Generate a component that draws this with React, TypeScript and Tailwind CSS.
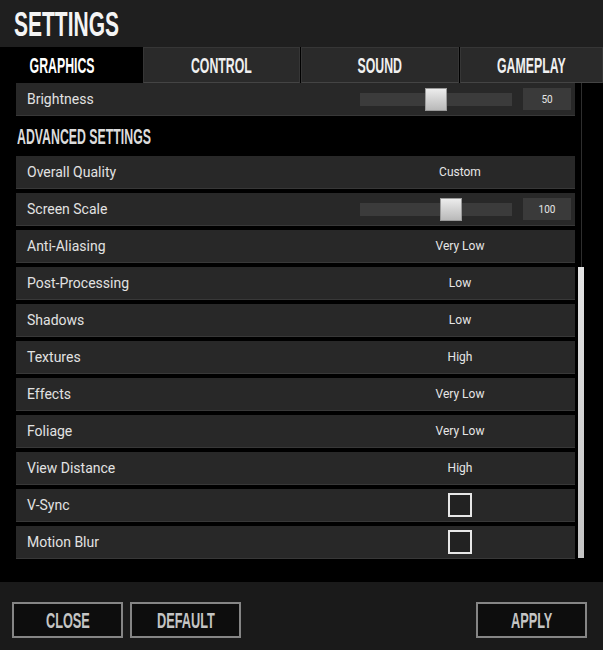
import React from 'react';

const narrow = { fontFamily: '"Liberation Sans", Arial, sans-serif' };
const body = { fontFamily: 'Roboto, "Noto Sans", sans-serif' };

// Squeezed bold caps used for titles, tabs and buttons
function Caps({ children, className = 'scale-x-[0.58]' }: { children: React.ReactNode; className?: string }) {
  return (
    <span style={narrow} className={`inline-block font-bold whitespace-nowrap ${className}`}>
      {children}
    </span>
  );
}

type Row = { label: string; value?: string; slider?: { pos: number; value: string }; check?: boolean };

const rows: Row[] = [
  { label: 'Overall Quality', value: 'Custom' },
  { label: 'Screen Scale', slider: { pos: 80, value: '100' } },
  { label: 'Anti-Aliasing', value: 'Very Low' },
  { label: 'Post-Processing', value: 'Low' },
  { label: 'Shadows', value: 'Low' },
  { label: 'Textures', value: 'High' },
  { label: 'Effects', value: 'Very Low' },
  { label: 'Foliage', value: 'Very Low' },
  { label: 'View Distance', value: 'High' },
  { label: 'V-Sync', check: true },
  { label: 'Motion Blur', check: true },
];

function Slider({ pos, value }: { pos: number; value: string }) {
  return (
    <div className="flex items-center gap-[11px] pr-[4px]">
      <div className="relative w-[152px] h-[13px] bg-[#3b3b3b]">
        <div
          className="absolute top-[-5px] w-[22px] h-[23px] bg-gradient-to-b from-[#ececec] to-[#b9b9b9] border border-[#9a9a9a]"
          style={{ left: pos }}
        />
      </div>
      <div className="w-[48px] h-[22px] bg-[#3a3a3a] flex items-center justify-center text-[10px] text-[#e6e6e6]">
        {value}
      </div>
    </div>
  );
}

function SettingRow({ row }: { row: Row }) {
  return (
    <div className="h-[33px] bg-[#282828] border-b border-[#383838] flex items-center shrink-0">
      <div className="flex-1 pl-[11px] text-[14px] text-[#e2e2e2]">{row.label}</div>
      {row.slider ? (
        <Slider pos={row.slider.pos} value={row.slider.value} />
      ) : (
        <div className="w-[200px] mr-[15px] flex justify-center text-[12px] text-[#e6e6e6]">
          {row.check ? (
            <div className="w-[24px] h-[24px] border-2 border-[#e8e8e8] bg-[#222]" />
          ) : (
            row.value
          )}
        </div>
      )}
    </div>
  );
}

function Button({ label }: { label: string }) {
  return (
    <button className="w-[111px] h-[36px] border-2 border-[#858585] bg-[#0d0d0d] flex items-center justify-center text-[22px] text-[#c4c4c4]">
      <Caps>{label}</Caps>
    </button>
  );
}

export default function App() {
  const tabs = ['CONTROL', 'SOUND', 'GAMEPLAY'];

  return (
    <div style={body} className="w-[603px] h-[650px] bg-black flex flex-col overflow-hidden">
      {/* title bar */}
      <header className="h-[47px] bg-[#1f1f1f] flex items-center pl-[14px] shrink-0">
        <Caps className="scale-x-[0.6] origin-left text-[35px] text-[#f4f4f4] leading-none">SETTINGS</Caps>
      </header>

      {/* tabs */}
      <nav className="h-[36px] flex shrink-0 bg-black">
        <div className="w-[143px] flex items-center justify-center pr-[18px] text-[22px] text-white">
          <Caps className="scale-x-[0.56]">GRAPHICS</Caps>
        </div>
        {tabs.map((t, i) => (
          <div
            key={t}
            className={`${i === 0 ? 'w-[157px]' : i === 1 ? 'w-[158px] ml-px' : 'flex-1 ml-px'} bg-[#2a2a2a] border border-[#363636] border-b-[#444] flex items-center justify-center text-[22px] text-[#f0f0f0]`}
          >
            <Caps className="scale-x-[0.56]">{t}</Caps>
          </div>
        ))}
      </nav>

      {/* settings list */}
      <main className="flex-1 flex bg-black min-h-0">
        <div className="w-[559px] ml-[16px] flex flex-col">
          <div className="h-[33px] bg-[#282828] border-b border-[#383838] flex items-center shrink-0">
            <div className="flex-1 pl-[11px] text-[14px] text-[#e2e2e2]">Brightness</div>
            <Slider pos={65} value="50" />
          </div>
          <div className="h-[40px] flex items-center pl-[1px] text-[22px] text-[#dcdcdc] shrink-0">
            <Caps className="scale-x-[0.56] origin-left">ADVANCED SETTINGS</Caps>
          </div>
          <div className="flex flex-col gap-[4px]">
            {rows.map((r) => (
              <SettingRow key={r.label} row={r} />
            ))}
          </div>
        </div>
        {/* scrollbar */}
        <div className="relative w-[8px] ml-[3px]">
          <div className="absolute left-[3px] top-0 h-[475px] w-px bg-[#2e2e2e]" />
          <div className="absolute left-0 top-[184px] w-[6px] h-[291px] bg-gradient-to-b from-[#e4e4e4] to-[#c4c4c4]" />
        </div>
      </main>

      {/* footer actions */}
      <footer className="h-[68px] bg-[#1a1a1a] flex items-start pt-[20px] pl-[12px] pr-[16px] gap-[7px] shrink-0">
        <Button label="CLOSE" />
        <Button label="DEFAULT" />
        <div className="flex-1" />
        <Button label="APPLY" />
      </footer>
    </div>
  );
}
